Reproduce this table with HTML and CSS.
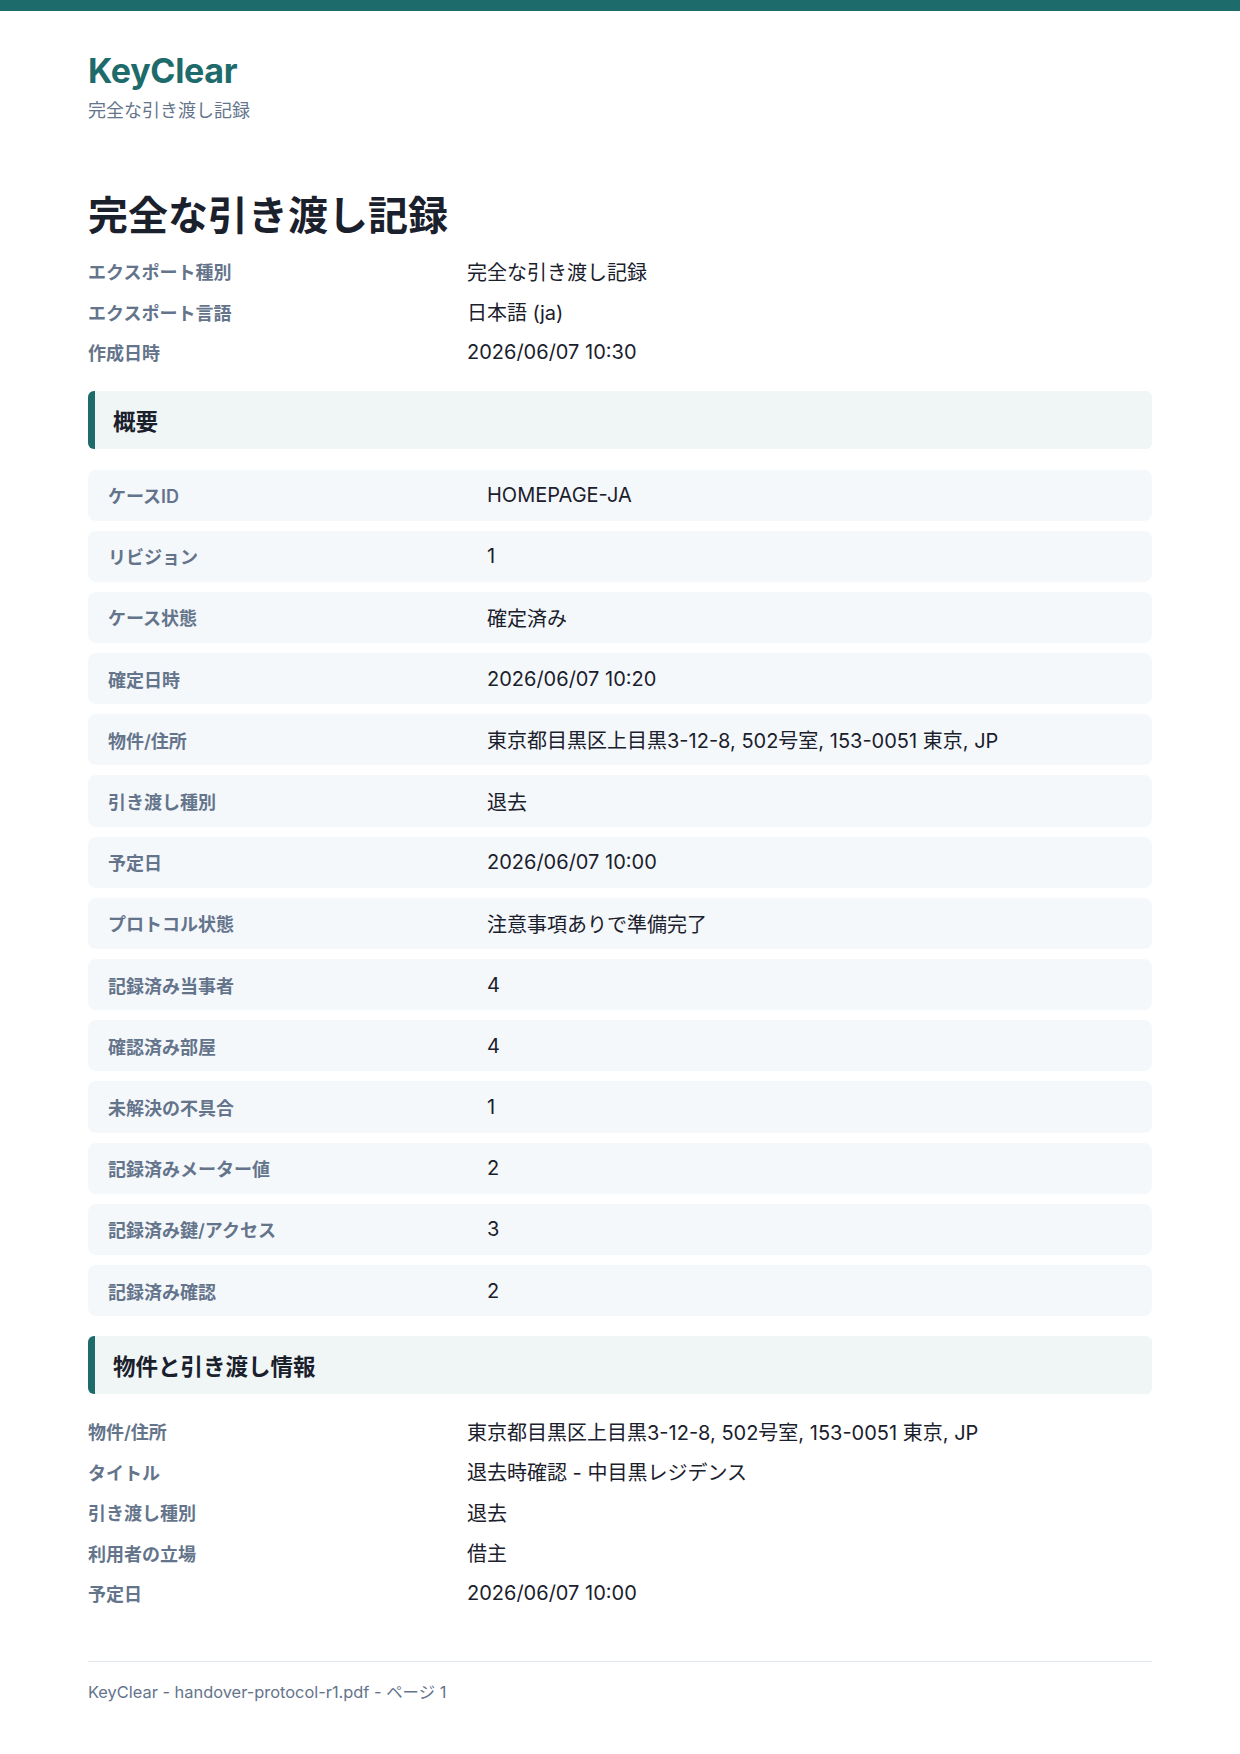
FILE: index.html
```html
<!DOCTYPE html>
<html lang="ja">
<head>
<meta charset="utf-8">
<title>KeyClear - 完全な引き渡し記録</title>
<link rel="stylesheet" href="styles.css">
</head>
<body>
<div class="topbar"></div>
<div class="page">
  <header class="brand">
    <div class="brand-name">KeyClear</div>
    <div class="brand-sub">完全な引き渡し記録</div>
  </header>

  <h1 class="title">完全な引き渡し記録</h1>

  <dl class="meta">
    <div class="meta-row"><dt>エクスポート種別</dt><dd>完全な引き渡し記録</dd></div>
    <div class="meta-row"><dt>エクスポート言語</dt><dd>日本語 (ja)</dd></div>
    <div class="meta-row"><dt>作成日時</dt><dd>2026/06/07 10:30</dd></div>
  </dl>

  <h2 class="section-head">概要</h2>

  <dl class="cards">
    <div class="card-row"><dt>ケースID</dt><dd>HOMEPAGE-JA</dd></div>
    <div class="card-row"><dt>リビジョン</dt><dd>1</dd></div>
    <div class="card-row"><dt>ケース状態</dt><dd>確定済み</dd></div>
    <div class="card-row"><dt>確定日時</dt><dd>2026/06/07 10:20</dd></div>
    <div class="card-row"><dt>物件/住所</dt><dd>東京都目黒区上目黒3-12-8, 502号室, 153-0051 東京, JP</dd></div>
    <div class="card-row"><dt>引き渡し種別</dt><dd>退去</dd></div>
    <div class="card-row"><dt>予定日</dt><dd>2026/06/07 10:00</dd></div>
    <div class="card-row"><dt>プロトコル状態</dt><dd>注意事項ありで準備完了</dd></div>
    <div class="card-row"><dt>記録済み当事者</dt><dd>4</dd></div>
    <div class="card-row"><dt>確認済み部屋</dt><dd>4</dd></div>
    <div class="card-row"><dt>未解決の不具合</dt><dd>1</dd></div>
    <div class="card-row"><dt>記録済みメーター値</dt><dd>2</dd></div>
    <div class="card-row"><dt>記録済み鍵/アクセス</dt><dd>3</dd></div>
    <div class="card-row"><dt>記録済み確認</dt><dd>2</dd></div>
  </dl>

  <h2 class="section-head second">物件と引き渡し情報</h2>

  <dl class="meta info">
    <div class="meta-row"><dt>物件/住所</dt><dd>東京都目黒区上目黒3-12-8, 502号室, 153-0051 東京, JP</dd></div>
    <div class="meta-row"><dt>タイトル</dt><dd>退去時確認 - 中目黒レジデンス</dd></div>
    <div class="meta-row"><dt>引き渡し種別</dt><dd>退去</dd></div>
    <div class="meta-row"><dt>利用者の立場</dt><dd>借主</dd></div>
    <div class="meta-row"><dt>予定日</dt><dd>2026/06/07 10:00</dd></div>
  </dl>

  <footer class="footer">KeyClear - handover-protocol-r1.pdf - ページ 1</footer>
</div>
</body>
</html>
```

FILE: styles.css
```css
* { box-sizing: border-box; }
html, body {
  margin: 0;
  padding: 0;
  background: #ffffff;
}
body {
  font-family: "Inter", "Noto Sans CJK JP", sans-serif;
  color: #1f2937;
}
dl, dt, dd, h1, h2 { margin: 0; padding: 0; }

.topbar {
  height: 11px;
  background: #1e6b6b;
}

.page {
  padding: 0 88px;
}

.brand {
  padding-top: 40px;
}
.brand-name {
  font-size: 34px;
  line-height: 40px;
  font-weight: 700;
  color: #1e6b6b;
  letter-spacing: -0.3px;
}
.brand-sub {
  margin-top: 7px;
  font-size: 18px;
  line-height: 26px;
  color: #64748b;
}

.title {
  margin-top: 68px;
  font-size: 40px;
  line-height: 48px;
  font-weight: 700;
  color: #1a202c;
}

.meta {
  margin-top: 11px;
}
.meta-row {
  display: grid;
  grid-template-columns: 379px 1fr;
  height: 40.5px;
  align-items: center;
}
.meta-row dt {
  font-size: 18px;
  font-weight: 600;
  color: #64748b;
}
.meta-row dd {
  font-size: 20px;
  color: #1a202c;
}

.section-head {
  margin-top: 18px;
  height: 58px;
  display: flex;
  align-items: center;
  background: #f0f5f5;
  border-left: 7px solid #1e6b6b;
  border-radius: 6px;
  padding-left: 18px;
  font-size: 22.5px;
  font-weight: 700;
  color: #1a202c;
}
.section-head.second {
  margin-top: 20px;
}

.cards {
  margin-top: 21px;
  display: flex;
  flex-direction: column;
  gap: 10px;
}
.card-row {
  display: grid;
  grid-template-columns: 379px 1fr;
  align-items: center;
  height: 51.2px;
  padding: 0 20px;
  background: #f5f8fb;
  border-radius: 8px;
}
.card-row dt {
  font-size: 18px;
  font-weight: 600;
  color: #64748b;
}
.card-row dd {
  font-size: 20px;
  color: #1a202c;
}

.info {
  margin-top: 17px;
}

.footer {
  margin-top: 47px;
  border-top: 1.5px solid #e2e8f0;
  padding-top: 17px;
  font-size: 16.4px;
  color: #64748b;
}
```
